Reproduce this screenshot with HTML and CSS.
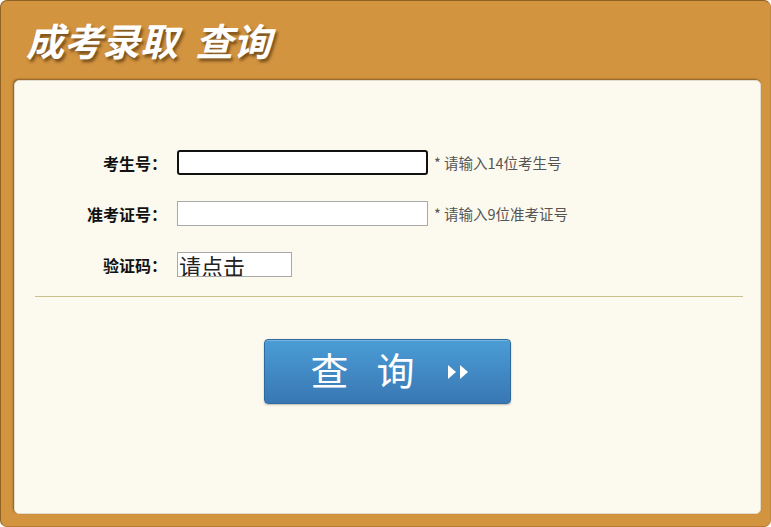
FILE: index.html
```html
<!DOCTYPE html>
<html lang="zh-CN">
<head>
  <meta charset="UTF-8">
  <title>成考录取查询</title>
  <link rel="stylesheet" href="styles.css">
</head>
<body>
  <div class="frame">
    <h1 class="title">成考录取&nbsp;&nbsp;查询</h1>
    <div class="panel">
      <form class="form">
        <div class="row">
          <label for="ksh">考生号：</label>
          <input type="text" id="ksh" class="field focus">
          <span class="hint">* 请输入14位考生号</span>
        </div>
        <div class="row">
          <label for="zkzh">准考证号：</label>
          <input type="text" id="zkzh" class="field">
          <span class="hint">* 请输入9位准考证号</span>
        </div>
        <div class="row">
          <label for="yzm">验证码：</label>
          <input type="text" id="yzm" class="field code" value="请点击">
        </div>
      </form>
      <div class="divider"></div>
      <div class="actions">
        <button type="button" class="submit">
          <span class="submit-text">查</span>
          <span class="submit-text">询</span>
          <svg class="arrows" width="24" height="16" viewBox="0 0 24 16">
            <polygon points="1,1 9,8 1,15" fill="#fff"/>
            <polygon points="13,1 21,8 13,15" fill="#fff"/>
          </svg>
        </button>
      </div>
    </div>
  </div>
</body>
</html>
```

FILE: styles.css
```css
:root {
  --orange: #d39440;
  --cream: #fcfaee;
  --line: #c9c08c;
  --blue-top: #4b9dd6;
  --blue-bottom: #3877b3;
}

body {
  margin: 0;
  font-family: "Noto Sans CJK SC", "Noto Sans", sans-serif;
  background: #fff;
}

.frame {
  width: 771px;
  height: 527px;
  box-sizing: border-box;
  background: var(--orange);
  border: 1px solid #8f6122;
  border-right-color: #c4883a;
  border-bottom-color: #b57a30;
  border-radius: 7px;
  display: flex;
  flex-direction: column;
}

.title {
  margin: 0;
  height: 79px;
  box-sizing: border-box;
  padding: 13px 0 0 25px;
  color: #fff;
  font-size: 38px;
  font-weight: bold;
  font-style: italic;
  line-height: 52px;
  letter-spacing: 0;
  text-shadow: 2px 3px 3px rgba(60, 35, 5, 0.6);
}

.panel {
  flex: 1;
  margin: 0 9px 12px 13px;
  background: var(--cream);
  border-radius: 5px;
  border: 1px solid #e2ddca;
  box-shadow: -1px -1px 2px rgba(70, 50, 20, 0.55);
  padding-top: 69px;
}

.form {
  display: flex;
  flex-direction: column;
  gap: 26px;
}

.row {
  display: flex;
  align-items: center;
  height: 25px;
}

.row label {
  width: 152px;
  padding-right: 10px;
  text-align: right;
  font-size: 16px;
  font-weight: bold;
  color: #111;
}

.field {
  width: 251px;
  height: 25px;
  box-sizing: border-box;
  margin: 0;
  border: 1px solid #a9a9a9;
  background: #fff;
  padding: 0 2px;
  font-size: 14px;
  font-family: inherit;
}

.field.focus {
  border: 2px solid #111;
  border-radius: 3px;
}

.field.code {
  width: 115px;
  font-size: 22px;
  line-height: 23px;
  color: #222;
  padding: 0 1px;
}

.hint {
  margin-left: 6px;
  font-size: 14.5px;
  color: #555;
}

.divider {
  margin: 19px 17px 0 20px;
  height: 1px;
  background: var(--line);
}

.actions {
  display: flex;
  justify-content: center;
  padding-top: 42px;
}

.submit {
  width: 247px;
  height: 65px;
  display: flex;
  align-items: center;
  justify-content: center;
  gap: 28px;
  padding: 0 0 6px 6px;
  border: 1px solid #2f6a9e;
  border-radius: 4px;
  background: linear-gradient(to bottom, var(--blue-top), var(--blue-bottom));
  box-shadow: 0 1px 2px rgba(0, 0, 0, 0.25), inset 0 1px 0 rgba(255, 255, 255, 0.25);
  cursor: pointer;
}

.submit-text {
  color: #fff;
  font-size: 38px;
  font-weight: normal;
  line-height: 1;
  font-family: "Noto Sans CJK SC", sans-serif;
}

.arrows {
  margin: 6px 0 0 4px;
}
```
